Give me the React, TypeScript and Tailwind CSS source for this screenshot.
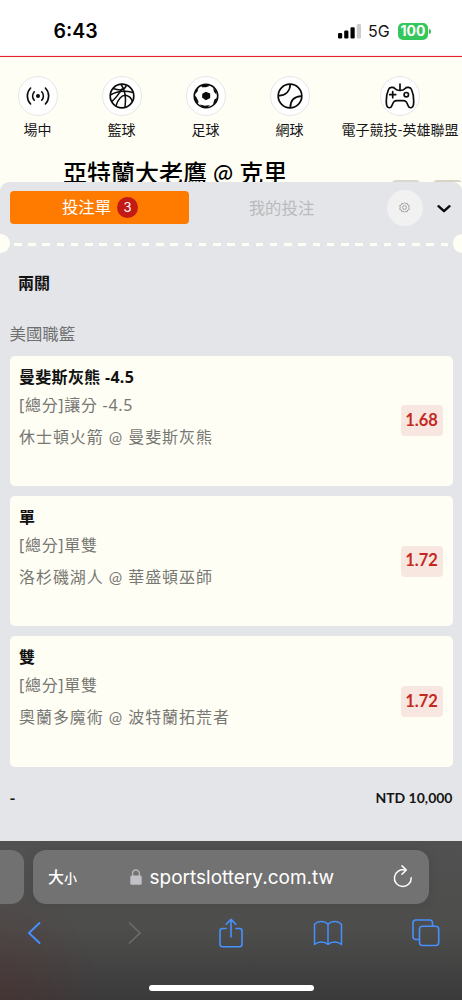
import type { ReactNode } from "react";

type Bet = {
  pick: string;
  market: string;
  match: string;
  odds: string;
};

const bets: Bet[] = [
  { pick: "曼斐斯灰熊 -4.5", market: "[總分]讓分 -4.5", match: "休士頓火箭 @ 曼斐斯灰熊", odds: "1.68" },
  { pick: "單", market: "[總分]單雙", match: "洛杉磯湖人 @ 華盛頓巫師", odds: "1.72" },
  { pick: "雙", market: "[總分]單雙", match: "奧蘭多魔術 @ 波特蘭拓荒者", odds: "1.72" },
];

function LiveIcon() {
  return (
    <svg width="24" height="20" viewBox="0 0 24 20" fill="none" stroke="#0b0b0b" strokeWidth="1.6" strokeLinecap="round">
      <circle cx="12" cy="10" r="2" fill="#0b0b0b" stroke="none" />
      <path d="M8.300 5.800a6 6 0 0 0 0 8.400M15.700 5.800a6 6 0 0 1 0 8.400" />
      <path d="M4.600 2a11.500 11.500 0 0 0 0 16M19.400 2a11.500 11.500 0 0 1 0 16" />
    </svg>
  );
}

function BasketballIcon() {
  return (
    <svg width="26" height="26" viewBox="0 0 26 26" fill="none" stroke="#0b0b0b" strokeWidth="1.5">
      <circle cx="13" cy="13" r="11.8" strokeWidth="1.7" />
      <path d="M12 1.300C15.500 6 17.500 14 16 24.300" />
      <path d="M17.500 2C16 6.500 13 8.500 4 5.500" />
      <path d="M1.300 12C8 8 17 7.500 24 9.500" />
      <path d="M2.500 18.500C8 15 10.500 9 13.500 5.500" />
      <path d="M7 23C9 16 13 11.500 17.500 12.500C21 13.500 22.800 16.500 23.300 18.500" />
    </svg>
  );
}

function FootballIcon() {
  return (
    <svg width="26" height="26" viewBox="0 0 26 26">
      <circle cx="13" cy="13" r="11.700" fill="none" stroke="#0b0b0b" strokeWidth="1.700" />
      <path d="M12.800 8.700L17.200 10.500V15L12.800 17.300L9 14.500L9.300 10.700Z" fill="#0b0b0b" />
      <path
        d="M8 2.300L14 1.300L16.500 3L13 4.300L9 4.200ZM20 4.600L23.500 8.500L23.300 11.500L21 8.800ZM24.300 14.500L22.500 19.500L20 21L21.500 16.500ZM17 22L14 24.800L8.500 23.800L7 21.500L12 22.700ZM1.500 13L3 13.500L5.500 18.500L5 20.500L2.200 17.500ZM5.500 4.500L2.200 8.500L2.300 11L4.500 8.500Z"
        fill="#0b0b0b"
      />
    </svg>
  );
}

function TennisIcon() {
  return (
    <svg width="26" height="26" viewBox="0 0 26 26" fill="none" stroke="#0b0b0b" strokeWidth="1.700">
      <circle cx="13" cy="13" r="11.800" />
      <path d="M13.300 1.300C13 8.500 8.500 12.700 1.300 12.800" />
      <path d="M24.700 13.200C17.500 13.500 13.300 17.500 13.300 24.700" />
    </svg>
  );
}

function GamepadIcon() {
  return (
    <svg width="30" height="28" viewBox="0 0 30 28" fill="none" stroke="#0b0b0b" strokeWidth="1.700" strokeLinecap="round" strokeLinejoin="round">
      <path d="M15 2V8.200" />
      <path d="M15 8.500C12 8.500 11 8.200 9.800 6.400C8.500 4.700 4.500 5 3.500 7.500C1.500 12 1.100 18.500 1.500 22.500C2 26.500 5.800 26.800 7 23.500C8.300 20 9 18.700 12 18.700H18C21 18.700 21.700 20 23 23.500C24.200 26.800 28 26.500 28.500 22.500C28.900 18.500 28.500 12 26.500 7.500C25.500 5 21.500 4.700 20.200 6.400C19 8.200 18 8.500 15 8.500Z" />
      <path d="M7.700 9.700V15.700M4.700 12.700H10.700" />
      <circle cx="21.300" cy="12.700" r="2.200" />
    </svg>
  );
}

function Sport({ label, width, children }: { label: string; width: string; children: ReactNode }) {
  return (
    <div className={`flex shrink-0 flex-col items-center ${width}`}>
      <div className="grid size-10 place-items-center rounded-full border border-[#e6e6e8] bg-white">{children}</div>
      <span className="mt-1 text-sm leading-5 whitespace-nowrap text-[#161616]">{label}</span>
    </div>
  );
}

function StatusBar() {
  return (
    <div className="flex h-14 items-center justify-between bg-white pt-[6px] pr-[31px] pl-[53.5px] font-['Inter',sans-serif]">
      <span className="text-[19.5px] leading-6 font-semibold text-black">6:43</span>
      <div className="flex items-center">
        <svg width="24" height="16" viewBox="0 0 24 16">
          <rect x="0" y="10" width="4.200" height="5.500" rx="1.200" />
          <rect x="6.200" y="7.500" width="4.200" height="8" rx="1.200" />
          <rect x="12.500" y="4.200" width="4.200" height="11.300" rx="1.200" />
          <rect x="18.800" y="1" width="4.200" height="14.500" rx="1.200" fill="#cccccc" />
        </svg>
        <span className="ml-[6px] w-[24px] text-base leading-5 text-[#151515]">5G</span>
        <span className="ml-[6px] flex h-[17px] w-[30px] items-center justify-center rounded-[5px] bg-[#34c759] text-[14px] leading-none font-bold text-white">
          100
        </span>
        <span className="ml-px h-[5px] w-[2px] rounded-r-full bg-[#34c759]" />
      </div>
    </div>
  );
}

function PageHeader() {
  return (
    <header className="h-[124.5px] overflow-hidden bg-[#fffef5] pt-[19px]">
      <nav className="-ml-[4.5px] flex">
        <Sport label="場中" width="w-[84px]"><LiveIcon /></Sport>
        <Sport label="籃球" width="w-[84px]"><BasketballIcon /></Sport>
        <Sport label="足球" width="w-[84px]"><FootballIcon /></Sport>
        <Sport label="網球" width="w-[84px]"><TennisIcon /></Sport>
        <Sport label="電子競技-英雄聯盟" width="w-[137px]"><GamepadIcon /></Sport>
      </nav>
      <div className="mt-[17px] flex items-start pl-[63px]">
        <h1 className="w-[329px] text-2xl leading-8 font-medium whitespace-nowrap text-black">亞特蘭大老鷹 @ 克里</h1>
        <span className="mt-[23px] h-8 w-[28px] rounded-[4px] bg-[#d8d7d0]" />
        <span className="mt-[23px] ml-[13px] h-8 w-[29px] rounded-[4px] bg-[#d8d4c6]" />
      </div>
    </header>
  );
}

function SlipTabs() {
  return (
    <div className="flex items-center pl-[9.500px]">
      <button className="flex h-[33px] w-[179px] items-center justify-center gap-[6px] rounded-[4px] bg-[#ff7b00] pl-[2px] text-[16.4px] leading-none text-white">
        投注單
        <span className="grid size-[21px] place-items-center rounded-full bg-[#c41a16] font-['Inter',sans-serif] text-[13px] leading-none">3</span>
      </button>
      <button className="w-[186px] text-center text-[16.4px] leading-6 text-[#b9babc]">我的投注</button>
      <button className="ml-[12px] grid size-9 place-items-center rounded-full bg-[#f1f1f2]">
        <svg width="11" height="11" viewBox="0 0 24 24" fill="none" stroke="#98999b" strokeWidth="2">
          <path d="M12 1.500L14.500 4L18 3L19 6.500L22.500 8L21.300 12L22.500 16L19 17.500L18 21L14.500 20L12 22.500L9.500 20L6 21L5 17.500L1.500 16L2.700 12L1.500 8L5 6.500L6 3L9.500 4Z" />
          <circle cx="12" cy="12" r="4.200" />
        </svg>
      </button>
      <svg className="mt-[2px] ml-[14px]" width="14" height="10" viewBox="0 0 14 10" fill="none" stroke="#0b0b0b" strokeWidth="2.400" strokeLinecap="round" strokeLinejoin="round">
        <path d="M1.500 2.200L7 7.200L12.500 2.200" />
      </svg>
    </div>
  );
}

function TearLine() {
  return (
    <div className="mt-[8px] flex h-[19px] items-center justify-between">
      <span className="h-[19px] w-[9.5px] rounded-r-full bg-[#fffef5]" />
      <div className="mt-[2px] h-[3px] w-[434px] bg-[repeating-linear-gradient(90deg,#fffef5_0_7.5px,transparent_7.5px_14.22px)]" />
      <span className="h-[19px] w-[9.5px] rounded-l-full bg-[#fffef5]" />
    </div>
  );
}

function BetCard({ bet }: { bet: Bet }) {
  return (
    <article className="flex h-[130.5px] items-center justify-between rounded-[5px] bg-[#fffef5] pr-[10px] pl-[9.500px]">
      <div className="h-full pt-[9px] whitespace-nowrap">
        <h3 className="font-['Noto_Sans','Noto_Sans_CJK_TC',sans-serif] text-base leading-6 font-bold tracking-[0.3px] text-[#111]">
          {bet.pick}
        </h3>
        <p className="mt-1 font-['Noto_Sans','Noto_Sans_CJK_TC',sans-serif] text-base leading-6 tracking-[0.7px] text-[#777773]">
          {bet.market}
        </p>
        <p className="mt-2 text-base leading-6 tracking-[0.95px] text-[#777773]">{bet.match}</p>
      </div>
      <span className="grid h-[31px] w-[42px] place-items-center rounded-[4px] bg-[#f8e7e0] pb-px font-['Lato',sans-serif] text-[16.5px] leading-none font-bold text-[#c5281f]">
        {bet.odds}
      </span>
    </article>
  );
}

function BrowserBar() {
  return (
    <footer className="h-[159px] bg-[radial-gradient(ellipse_100px_120px_at_0_100%,#562c2c66,transparent),linear-gradient(180deg,#515151_0%,#4d4d4c_55%,#3a3a3a_100%)] pt-[9px]">
      <div className="flex gap-[9.5px]">
        <div className="h-[54px] w-[23.5px] rounded-r-[13px] bg-[#717171]" />
        <div className="flex h-[54px] w-[396px] items-center rounded-[13px] bg-[#727272] text-white shadow-[0_0_12px_#00000018]">
          <span className="ml-[15px] w-[82px] text-base leading-6 font-medium">
            大<span className="text-[13px]">小</span>
          </span>
          <svg width="12" height="16" viewBox="0 0 12 16">
            <rect x="0.300" y="6.500" width="11.400" height="9.300" rx="1.500" fill="#c2c1c8" />
            <path d="M2.600 7V4.600C2.600 -.200 9.400 -.200 9.400 4.600V7" fill="none" stroke="#b5b4ba" strokeWidth="1.400" />
          </svg>
          <span className="ml-[7.500px] w-[186.500px] pt-[2px] font-['Inter',sans-serif] text-[19px] leading-6">sportslottery.com.tw</span>
          <svg className="ml-[56px]" width="22" height="24" viewBox="0 0 22 24" fill="none" stroke="#fff" strokeWidth="1.500" strokeLinecap="round" strokeLinejoin="round">
            <path d="M19.200 12.700A8.400 8.400 0 1 1 13 5" />
            <path d="M10 .900L14.300 5L10 9.200" />
          </svg>
        </div>
      </div>
      <div className="mt-[13px] flex h-8 items-center pl-[27px] text-[#4691ff]">
        <svg width="14" height="24" viewBox="0 0 14 24" fill="none" stroke="currentColor" strokeWidth="1.900" strokeLinecap="round">
          <path d="M12.500 2L2 12L12.500 22" />
        </svg>
        <svg className="ml-[87px]" width="14" height="24" viewBox="0 0 14 24" fill="none" stroke="#6b6b6b" strokeWidth="1.700" strokeLinecap="round">
          <path d="M1.500 2L12 12L1.500 22" />
        </svg>
        <svg className="ml-[76px]" width="26" height="32" viewBox="0 0 26 32" fill="none" stroke="currentColor" strokeWidth="1.600" strokeLinecap="round" strokeLinejoin="round">
          <path d="M8 11.500H4.500Q2 11.500 2 14V27Q2 29.700 4.500 29.700H21.500Q24 29.700 24 27V14Q24 11.500 21.500 11.500H18" />
          <path d="M13 20V2.500M8.200 7.200L13 2.400L17.800 7.200" />
        </svg>
        <svg className="ml-[69px]" width="30" height="26" viewBox="0 0 30 26" fill="none" stroke="currentColor" strokeWidth="1.500" strokeLinejoin="round">
          <path d="M15 4.200C11.500 .700 5 .700 1.500 4.200V24.500C5 21.200 11.500 21.200 15 24.500C18.500 21.200 25 21.200 28.500 24.500V4.200C25 .700 18.500 .700 15 4.200ZM15 4.200V24.500" />
        </svg>
        <svg className="ml-[69px]" width="28" height="28" viewBox="0 0 28 28" fill="none" stroke="currentColor" strokeWidth="1.600">
          <path d="M7.500 20.500H4Q1 20.500 1 17.500V4Q1 1 4 1H17.500Q20.500 1 20.500 4V7.200" />
          <rect x="7.500" y="7.200" width="19.200" height="19.300" rx="3" />
        </svg>
      </div>
      <div className="mt-[35.5px] ml-[149px] h-[6.5px] w-[165px] rounded-full bg-white" />
    </footer>
  );
}

export default function App() {
  return (
    <div className="flex h-[1000px] w-[462px] flex-col overflow-hidden bg-[#fffef5] font-['Lato','Noto_Sans_CJK_TC',sans-serif]">
      <StatusBar />
      <div className="h-px shrink-0 bg-[#e3252c] shadow-[0_0_1px_#e3252c]" />
      <PageHeader />
      <main className="h-[659.5px] shrink-0 rounded-t-[9px] bg-[#e4e5e8] pt-[8px]">
        <SlipTabs />
        <TearLine />
        <section className="px-[9.5px]">
          <h2 className="mt-[18px] pl-[8.500px] text-base leading-6 font-bold text-[#111]">兩關</h2>
          <p className="mt-[27px] text-[16.4px] leading-6 text-[#6f7072]">美國職籃</p>
          <div className="mt-[10px] flex flex-col gap-[9.750px]">
            {bets.map((bet) => (
              <BetCard key={bet.match} bet={bet} />
            ))}
          </div>
          <div className="mt-[21px] flex justify-between text-sm leading-5 font-bold text-[#151515]">
            <span className="text-base leading-5">-</span>
            <span>NTD 10,000</span>
          </div>
        </section>
      </main>
      <BrowserBar />
    </div>
  );
}
